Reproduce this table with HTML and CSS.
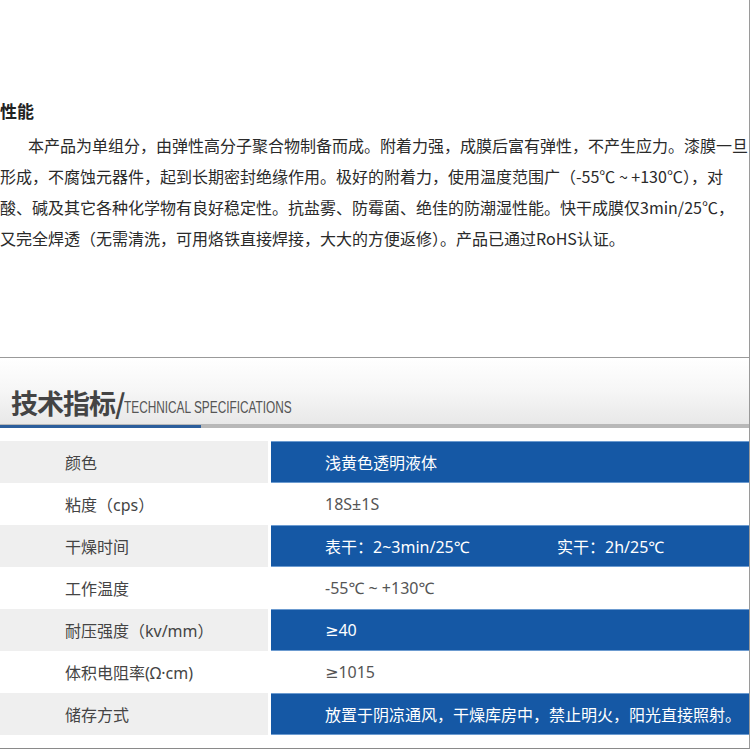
FILE: index.html
```html
<!DOCTYPE html>
<html lang="zh">
<head>
<meta charset="utf-8">
<title>技术指标</title>
<link rel="stylesheet" href="styles.css">
</head>
<body>
<div class="page">
  <section class="perf">
    <h3 class="perf-title">性能</h3>
    <p class="perf-text">本产品为单组分，由弹性高分子聚合物制备而成。附着力强，成膜后富有弹性，不产生应力。漆膜一旦<br>形成，不腐蚀元器件，起到长期密封绝缘作用。极好的附着力，使用温度范围广（-55℃ ~ +130℃），对<br>酸、碱及其它各种化学物有良好稳定性。抗盐雾、防霉菌、绝佳的防潮湿性能。快干成膜仅3min/25℃，<br>又完全焊透（无需清洗，可用烙铁直接焊接，大大的方便返修）。产品已通过RoHS认证。</p>
  </section>
  <section class="spec">
    <div class="spec-head">
      <span class="spec-zh">技术指标/</span><span class="spec-en">TECHNICAL SPECIFICATIONS</span>
    </div>
    <div class="spec-rule"><span class="spec-rule-blue"></span></div>
    <div class="spec-table">
      <div class="row odd"><div class="key">颜色</div><div class="val">浅黄色透明液体</div></div>
      <div class="row"><div class="key">粘度（cps）</div><div class="val">18S±1S</div></div>
      <div class="row odd"><div class="key">干燥时间</div><div class="val"><span class="v1">表干：2~3min/25℃</span><span>实干：2h/25℃</span></div></div>
      <div class="row"><div class="key">工作温度</div><div class="val">-55℃ ~ +130℃</div></div>
      <div class="row odd"><div class="key">耐压强度（kv/mm）</div><div class="val">≥40</div></div>
      <div class="row"><div class="key">体积电阻率(Ω·cm)</div><div class="val">≥1015</div></div>
      <div class="row odd"><div class="key">储存方式</div><div class="val">放置于阴凉通风，干燥库房中，禁止明火，阳光直接照射。</div></div>
    </div>
  </section>
</div>
</body>
</html>
```
FILE: styles.css
```css
html, body {
  margin: 0;
  padding: 0;
  background: #fff;
}
body {
  font-family: "Noto Sans CJK SC", "Noto Sans", sans-serif;
  color: #333;
}
.page {
  width: 749px;
  height: 748px;
  border-right: 1px solid #9a9a9a;
  border-bottom: 1px solid #8a8a8a;
  display: flex;
  flex-direction: column;
  overflow: hidden;
}
.perf {
  flex: 0 0 357px;
  padding-top: 99px;
  box-sizing: border-box;
}
.perf-title {
  margin: 0;
  font-size: 17px;
  line-height: 24px;
  font-weight: bold;
  color: #222;
}
.perf-text {
  margin: 7px 0 0;
  font-size: 16px;
  line-height: 31px;
  text-indent: 28px;
  white-space: nowrap;
  color: #2a2a2a;
}
.spec {
  flex: 0 0 auto;
  border-top: 1px solid #9a9a9a;
}
.spec-head {
  height: 66px;
  background: linear-gradient(#ffffff 0%, #f6f6f6 50%, #e8e8e8 100%);
  display: flex;
  align-items: flex-end;
  padding-left: 11px;
  box-sizing: border-box;
}
.spec-zh {
  font-size: 27px;
  font-weight: bold;
  color: #444;
  line-height: 42px;
  letter-spacing: -1px;
}
.spec-en {
  display: inline-block;
  font-family: "Liberation Sans", Arial, sans-serif;
  font-size: 16px;
  color: #555;
  line-height: 32px;
  transform: scaleX(0.74);
  transform-origin: left center;
  white-space: nowrap;
}
.spec-rule {
  height: 4px;
  background: #b8b8b8;
  display: flex;
}
.spec-rule-blue {
  width: 201px;
  height: 3px;
  margin-top: 1px;
  background: #2b5e9c;
}
.spec-table {
  margin-top: 13px;
  display: flex;
  flex-direction: column;
}
.row {
  display: grid;
  grid-template-columns: 268px 1fr;
  column-gap: 3px;
  height: 42px;
  font-family: "Noto Sans", "DejaVu Sans", "Noto Sans CJK SC", sans-serif;
  font-size: 16px;
}
.key {
  display: flex;
  align-items: center;
  padding-left: 65px;
  color: #444;
}
.val {
  display: flex;
  align-items: center;
  padding-left: 54px;
  color: #555;
}
.row.odd .key {
  background: #efefef;
}
.row.odd .val {
  background: #1558a5;
  color: #fff;
  box-shadow: inset 0 1px 0 #6c9bd0, inset 0 -1px 0 #6c9bd0;
}
.v1 {
  width: 232px;
}
```
